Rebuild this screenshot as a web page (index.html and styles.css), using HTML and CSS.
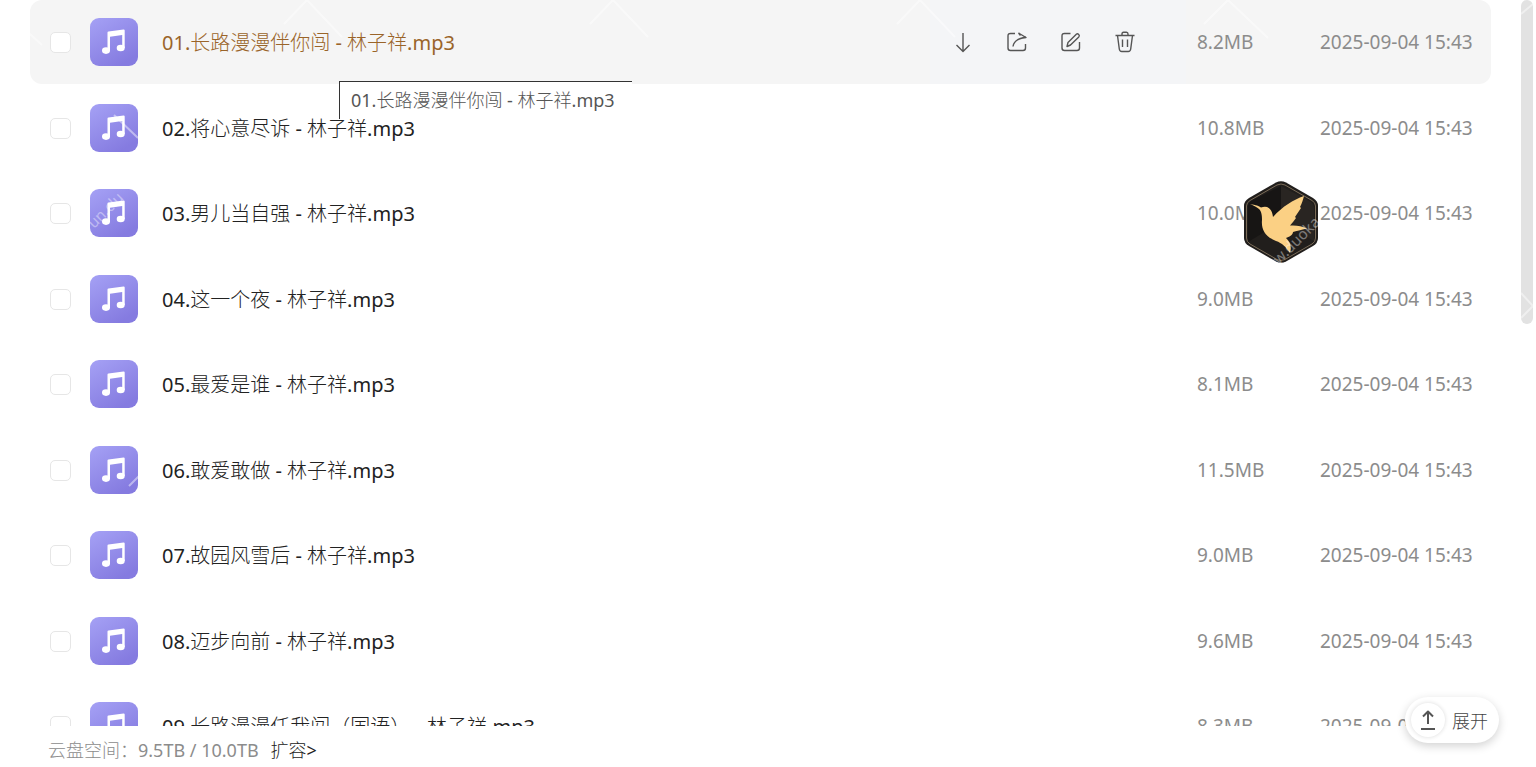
FILE: index.html
```html
<!DOCTYPE html>
<html lang="zh-CN">
<head>
    <meta charset="UTF-8">
    <meta name="viewport" content="width=device-width, initial-scale=1.0">
    <title>云盘</title>
    <link rel="stylesheet" href="styles.css">
</head>
<body>
<svg class="symbols" aria-hidden="true">
    <defs>
        <linearGradient id="musicBg" x1="0" y1="0" x2="0.6" y2="1">
            <stop offset="0" stop-color="#a5a1f5"/>
            <stop offset="1" stop-color="#857be0"/>
        </linearGradient>
        <symbol id="music" viewBox="0 0 48 48">
            <rect width="48" height="48" rx="9" fill="url(#musicBg)"/>
            <path d="M17.500 14.500Q17.500 13.700 18.500 13.500L33.500 11.500Q34.700 11.400 34.700 12.500V30H32.200V17L20 18.700V33H17.500Z" fill="#fff"/>
            <ellipse cx="16" cy="32.600" rx="4" ry="3.300" fill="#fff"/>
            <ellipse cx="30.700" cy="30" rx="4" ry="3.300" fill="#fff"/>
        </symbol>
    </defs>
</svg>

<main class="file-area">
    <ul class="file-list">
        <li class="file-row active">
            <input type="checkbox" class="check" aria-label="选择 01">
            <svg class="file-icon"><use href="#music"/></svg>
            <a class="file-name" href="#">01.长路漫漫伴你闯 - 林子祥.mp3</a>
            <div class="actions">
                <button type="button" aria-label="下载">
                    <svg viewBox="0 0 22 22"><path d="M11 2V20.500M4.500 14L11 20.500L17.500 14"/></svg>
                </button>
                <button type="button" aria-label="分享">
                    <svg viewBox="0 0 22 22"><path d="M9 2.500H4.500Q2 2.500 2 5V17Q2 19.500 4.500 19.500H17Q19.500 19.500 19.500 17V13"/><path d="M12.500 2L20 6.500C13 7 8 9 7 15.500M12.500 2L14.500 4.500"/></svg>
                </button>
                <button type="button" aria-label="重命名">
                    <svg viewBox="0 0 22 22"><path d="M10.500 2.500H4.500Q2 2.500 2 5V17Q2 19.500 4.500 19.500H17Q19.500 19.500 19.500 17V11"/><path d="M7 15.500L8 11.500L16.300 3.200Q17.500 2.300 18.700 3.400Q19.900 4.700 18.800 5.900L10.500 14Z"/></svg>
                </button>
                <button type="button" aria-label="删除">
                    <svg viewBox="0 0 22 22"><path d="M1.500 4.500H20.500M8 4.500V3Q8 1.200 9.500 1.200H12.500Q14 1.200 14 3V4.500M3.500 4.500L5.300 18Q5.600 20.500 7.800 20.500H14.200Q16.400 20.500 16.700 18L18.500 4.500M8.500 8.500V16M13.500 8.500V16"/></svg>
                </button>
            </div>
            <span class="size">8.2MB</span>
            <time class="date">2025-09-04 15:43</time>
            <div class="tooltip" role="tooltip">01.长路漫漫伴你闯 - 林子祥.mp3</div>
        </li>
        <li class="file-row">
            <input type="checkbox" class="check" aria-label="选择 02">
            <svg class="file-icon"><use href="#music"/></svg>
            <a class="file-name" href="#">02.将心意尽诉 - 林子祥.mp3</a>
            <span class="size">10.8MB</span>
            <time class="date">2025-09-04 15:43</time>
        </li>
        <li class="file-row">
            <input type="checkbox" class="check" aria-label="选择 03">
            <svg class="file-icon"><use href="#music"/></svg>
            <a class="file-name" href="#">03.男儿当自强 - 林子祥.mp3</a>
            <span class="size">10.0MB</span>
            <time class="date">2025-09-04 15:43</time>
        </li>
        <li class="file-row">
            <input type="checkbox" class="check" aria-label="选择 04">
            <svg class="file-icon"><use href="#music"/></svg>
            <a class="file-name" href="#">04.这一个夜 - 林子祥.mp3</a>
            <span class="size">9.0MB</span>
            <time class="date">2025-09-04 15:43</time>
        </li>
        <li class="file-row">
            <input type="checkbox" class="check" aria-label="选择 05">
            <svg class="file-icon"><use href="#music"/></svg>
            <a class="file-name" href="#">05.最爱是谁 - 林子祥.mp3</a>
            <span class="size">8.1MB</span>
            <time class="date">2025-09-04 15:43</time>
        </li>
        <li class="file-row">
            <input type="checkbox" class="check" aria-label="选择 06">
            <svg class="file-icon"><use href="#music"/></svg>
            <a class="file-name" href="#">06.敢爱敢做 - 林子祥.mp3</a>
            <span class="size">11.5MB</span>
            <time class="date">2025-09-04 15:43</time>
        </li>
        <li class="file-row">
            <input type="checkbox" class="check" aria-label="选择 07">
            <svg class="file-icon"><use href="#music"/></svg>
            <a class="file-name" href="#">07.故园风雪后 - 林子祥.mp3</a>
            <span class="size">9.0MB</span>
            <time class="date">2025-09-04 15:43</time>
        </li>
        <li class="file-row">
            <input type="checkbox" class="check" aria-label="选择 08">
            <svg class="file-icon"><use href="#music"/></svg>
            <a class="file-name" href="#">08.迈步向前 - 林子祥.mp3</a>
            <span class="size">9.6MB</span>
            <time class="date">2025-09-04 15:43</time>
        </li>
        <li class="file-row">
            <input type="checkbox" class="check" aria-label="选择 09">
            <svg class="file-icon"><use href="#music"/></svg>
            <a class="file-name" href="#">09.长路漫漫任我闯（国语） - 林子祥.mp3</a>
            <span class="size">8.3MB</span>
            <time class="date">2025-09-04 15:43</time>
        </li>
    </ul>
    <div class="scrollbar"><div class="thumb"></div></div>
</main>

<footer class="storage">
    <span>云盘空间：9.5TB / 10.0TB</span>
    <a href="#">扩容&gt;</a>
</footer>

<svg class="bird" viewBox="0 0 76 84" aria-hidden="true">
    <path d="M33 2.500Q38 0 43 2.500L70 18Q75 21 75 26V58Q75 63 70 66L43 81.500Q38 84 33 81.500L6 66Q1 63 1 58V26Q1 21 6 18Z" fill="#211e1c"/>
    <path d="M38 6V42L5 62V26Q5 23 8 21Z" fill="#171514"/>
    <path d="M38 6L68 22Q71 24 71 27V61L38 42Z" fill="#292522"/>
    <path d="M34 5Q38 3 42 5L69 20.500Q72.500 22.500 72.500 26V58Q72.500 62 69 64L42 79.500Q38 81.500 34 79.500L7 64Q3.500 62 3.500 58V26Q3.500 22.500 7 20.500Z" fill="none" stroke="#7b6c58" stroke-width="1"/>
    <path d="M7 24C13 25 16 26 18 27.500C24 25 29 28 30 37C40 26 50 20 61 16C60 20 59 23 57 27L58 28C56 31 54 34 52 37L53 38C51 41 49 43 47 45.500C53 45 59 46 64 48.500C58 50 53 51 50 52C50 55 46 57 43 58C47 62 49 66 47 73C43 67 39 63 33 61C23 57 18 50 19 40C19 34 18 31 16 29C14 27 11 26 7 24Z" fill="#fbd084"/>
</svg>

<button type="button" class="expand">
    <span class="expand-icon">
        <svg viewBox="0 0 18 22"><path d="M9 15V2.500M4 7.500L9 2.500L14 7.500M2 20H16"/></svg>
    </span>
    展开
</button>

<svg class="watermark" aria-hidden="true">
    <path d="M284 24L307 0L342 37M590 24L613 0L648 37M897 24L920 0L955 37M1204 24L1228 0L1268 38M20 25L42 45"/>
    <path d="M114 115L138 138M129 486L140 475M1521 14L1533 4M1521 293L1533 306L1521 318"/>
    <text transform="translate(94 229) rotate(-45)">un.clu</text>
    <text transform="translate(1279 265) rotate(-45)">w.duoka</text>
</svg>
</body>
</html>
```
FILE: styles.css
```css
* {
    box-sizing: border-box;
}
body {
    margin: 0;
    height: 100vh;
    display: flex;
    flex-direction: column;
    overflow: hidden;
    background-color: #fff;
    color: #222;
    font-family: "Noto Sans", "Noto Sans CJK SC Light", "Noto Sans CJK SC", sans-serif;
    font-size: 19px;
}
a {
    color: inherit;
    text-decoration: none;
}
button {
    padding: 0;
    border: none;
    background: none;
    font: inherit;
    cursor: pointer;
}
.symbols {
    position: absolute;
    width: 0;
    height: 0;
}
.file-area {
    flex: 1;
    min-height: 0;
    display: flex;
    gap: 30px;
    padding: 0 3px 0 30px;
    overflow: hidden;
}
.file-list {
    flex: 1;
    margin: 0;
    padding: 0;
    list-style: none;
}
.file-row {
    position: relative;
    display: flex;
    align-items: center;
    height: 84px;
    margin-bottom: 1px;
    padding: 0 19px 0 20px;
    border-radius: 12px;
}
.file-row:nth-child(odd) {
    margin-bottom: 2px;
}
.file-row.active {
    background-color: #f5f5f5;
}
.check {
    appearance: none;
    width: 21px;
    height: 21px;
    margin: 0 19px 0 0;
    border: 1px solid #e6e6e6;
    border-radius: 5px;
    background-color: #fff;
}
.file-icon {
    width: 48px;
    height: 48px;
    margin-right: 24px;
}
.file-name {
    flex: 1;
    padding-top: 2px;
    font-size: 20px;
    line-height: 28px;
    white-space: nowrap;
}
.active .file-name {
    color: #9a6429;
}
.actions {
    display: flex;
    align-items: center;
    align-self: stretch;
    gap: 32px;
    padding: 0 50px 0 22px;
    background-color: #f4f5f7;
}
.actions button {
    width: 22px;
    height: 22px;
}
.actions svg {
    display: block;
    width: 22px;
    height: 22px;
}
.actions path,
.expand path {
    fill: none;
    stroke: #555;
    stroke-width: 1.4;
    stroke-linejoin: round;
}
.size {
    width: 123px;
    margin-left: 11px;
    color: #8c8c8c;
}
.date {
    width: 152px;
    color: #8c8c8c;
    white-space: nowrap;
}
.tooltip {
    position: absolute;
    z-index: 1;
    top: 81px;
    left: 309px;
    width: 293px;
    height: 38px;
    padding-left: 11px;
    border-top: 1px solid #333;
    border-left: 1px solid #333;
    background-color: #fff;
    color: #555;
    font-size: 18px;
    line-height: 36px;
    white-space: nowrap;
}
.scrollbar {
    width: 12px;
}
.thumb {
    height: 324px;
    border-radius: 6px;
    background-color: #e2e2e2;
}
.storage {
    display: flex;
    gap: 12px;
    height: 41px;
    padding-left: 48px;
    color: #8c8c8c;
    font-size: 18px;
    line-height: 48px;
}
.storage a {
    color: #222;
}
.bird {
    position: absolute;
    top: 180px;
    right: 217px;
    width: 76px;
    height: 84px;
}
.expand {
    position: absolute;
    right: 37px;
    bottom: 24px;
    display: flex;
    align-items: center;
    gap: 7px;
    height: 46px;
    padding: 0 11px 0 6px;
    border-radius: 23px;
    background-color: #fff;
    box-shadow: 0 3px 10px rgba(0,0,0,0.18);
    color: #444;
    font-size: 18px;
}
.expand-icon {
    display: flex;
    align-items: center;
    justify-content: center;
    width: 34px;
    height: 34px;
    border-radius: 50%;
    box-shadow: 0 0 4px rgba(0,0,0,0.15);
}
.expand-icon svg {
    width: 18px;
    height: 22px;
}
.expand path {
    stroke-width: 2;
}
.watermark {
    position: absolute;
    z-index: 2;
    top: 0;
    left: 0;
    width: 100%;
    height: 100%;
    pointer-events: none;
}
.watermark path {
    fill: none;
    stroke: #fff;
    stroke-width: 2;
    opacity: 0.45;
}
.watermark text {
    fill: #fff;
    font-size: 15px;
    opacity: 0.4;
}
```
